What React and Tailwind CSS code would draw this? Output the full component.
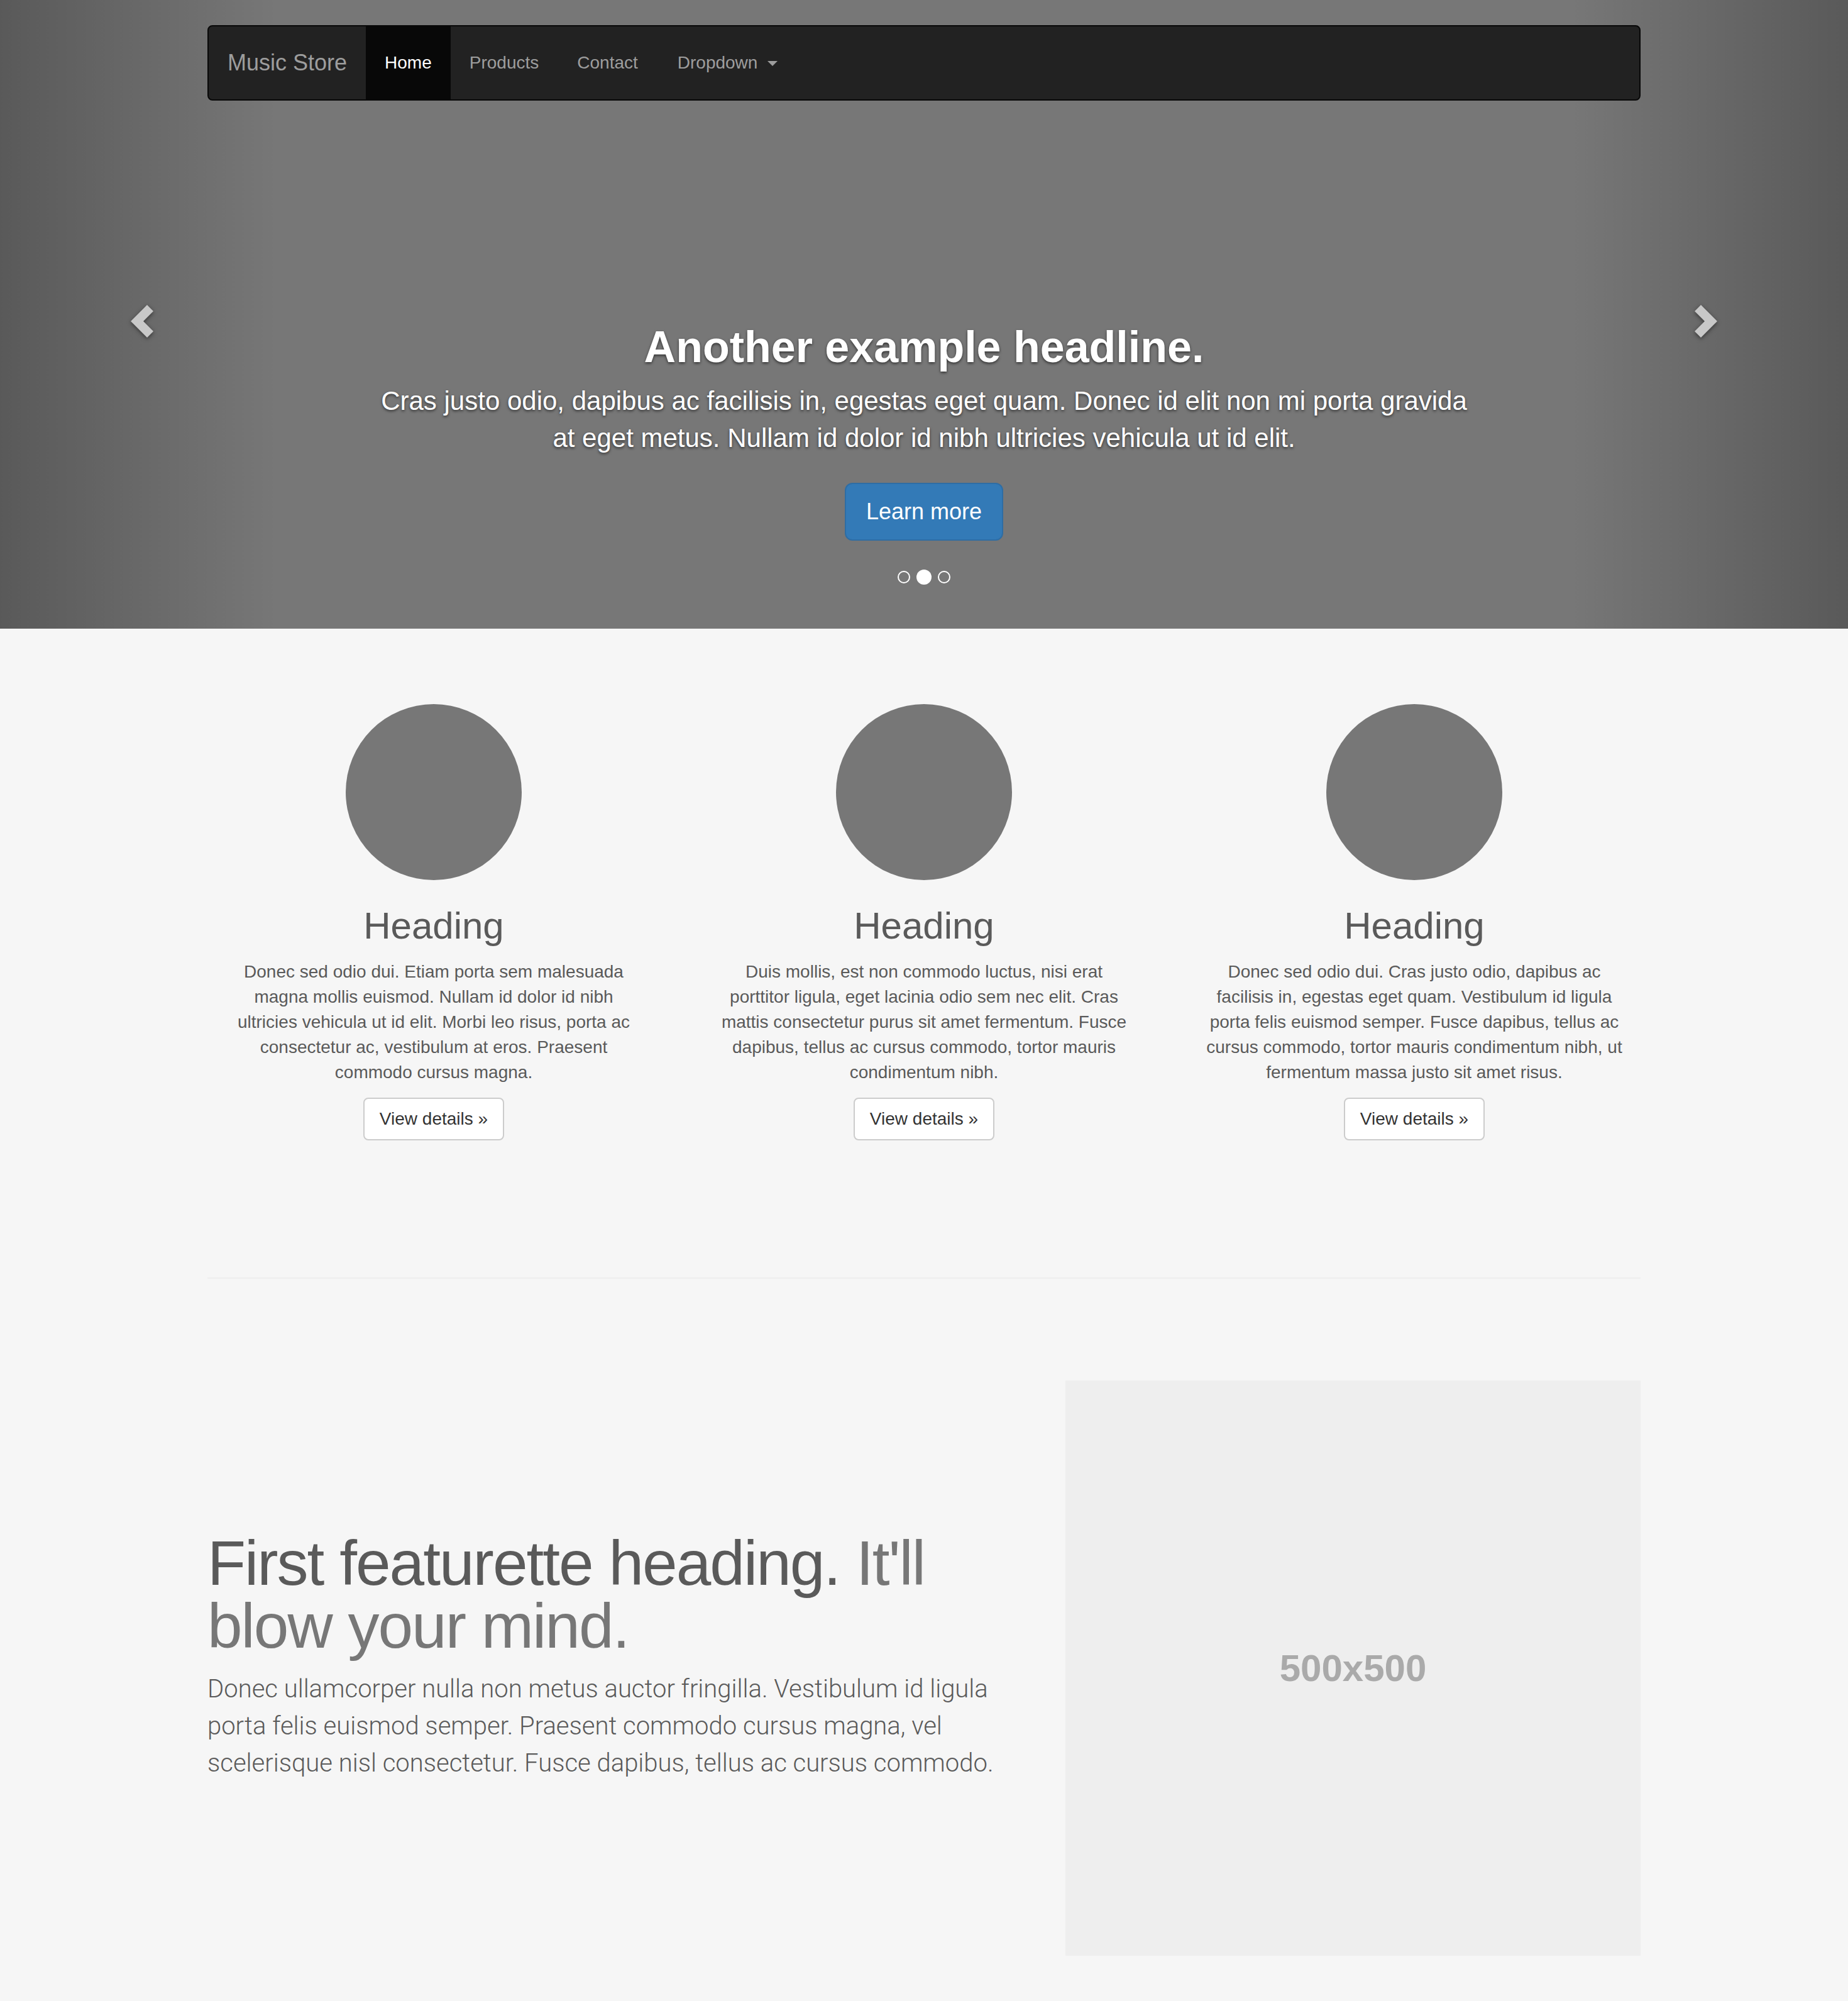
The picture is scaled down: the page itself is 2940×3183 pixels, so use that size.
export default function App() {
  const cols = [
    {
      text: "Donec sed odio dui. Etiam porta sem malesuada magna mollis euismod. Nullam id dolor id nibh ultricies vehicula ut id elit. Morbi leo risus, porta ac consectetur ac, vestibulum at eros. Praesent commodo cursus magna.",
    },
    {
      text: "Duis mollis, est non commodo luctus, nisi erat porttitor ligula, eget lacinia odio sem nec elit. Cras mattis consectetur purus sit amet fermentum. Fusce dapibus, tellus ac cursus commodo, tortor mauris condimentum nibh.",
    },
    {
      text: "Donec sed odio dui. Cras justo odio, dapibus ac facilisis in, egestas eget quam. Vestibulum id ligula porta felis euismod semper. Fusce dapibus, tellus ac cursus commodo, tortor mauris condimentum nibh, ut fermentum massa justo sit amet risus.",
    },
  ];

  return (
    <div className="min-h-[3183px] bg-[#f6f6f6] font-['Liberation_Sans',Arial,sans-serif] text-[#5a5a5a]">
      {/* Carousel */}
      <div className="relative h-[1000px] bg-[#777] flex flex-col items-center overflow-hidden">
        <div className="absolute inset-y-0 left-0 w-[441px] bg-linear-to-r from-black/25 to-black/0 flex items-center justify-center">
          <svg
            width="36"
            height="54"
            viewBox="0 0 36 54"
            className="ml-[11px] mt-[22px] drop-shadow-[0_2px_3px_rgba(0,0,0,0.5)]"
          >
            <polygon points="0,27 26,1 36,11 20,27 36,43 26,53" fill="#c8c8c8" />
          </svg>
        </div>
        <div className="absolute inset-y-0 right-0 w-[441px] bg-linear-to-l from-black/25 to-black/0 flex items-center justify-center">
          <svg
            width="36"
            height="54"
            viewBox="0 0 36 54"
            className="mr-[11px] mt-[22px] drop-shadow-[0_2px_3px_rgba(0,0,0,0.5)]"
          >
            <polygon points="36,27 10,1 0,11 16,27 0,43 10,53" fill="#c8c8c8" />
          </svg>
        </div>

        {/* Navbar */}
        <nav className="relative z-10 mt-[40px] w-[2280px] h-[120px] bg-[#222] border-2 border-[#080808] rounded-[8px] flex items-stretch overflow-hidden">
          <a className="px-[30px] flex items-center text-[36px] text-[#9d9d9d]">Music Store</a>
          <a className="px-[30px] flex items-center text-[28px] text-white bg-[#080808]">Home</a>
          <a className="px-[30px] flex items-center text-[28px] text-[#9d9d9d]">Products</a>
          <a className="pl-[31px] pr-[30px] flex items-center text-[28px] text-[#9d9d9d]">Contact</a>
          <a className="pl-[33px] pr-[30px] flex items-center text-[28px] text-[#9d9d9d]">
            Dropdown
            <span className="ml-[16px] mt-[2px] w-0 h-0 border-x-[8px] border-x-transparent border-t-[8px] border-t-[#9d9d9d]"></span>
          </a>
        </nav>

        {/* Caption */}
        <div className="relative z-10 mt-auto mb-[140px] w-[1764px] flex flex-col items-center text-center text-white [text-shadow:0_2px_4px_rgba(0,0,0,0.6)]">
          <h1 className="text-[70px] font-bold leading-[77px]">Another example headline.</h1>
          <p className="mt-[18px] text-[42px] leading-[58.8px]">
            Cras justo odio, dapibus ac facilisis in, egestas eget quam. Donec id elit non mi porta gravida at eget metus. Nullam id dolor id nibh ultricies vehicula ut id elit.
          </p>
          <a className="mt-[41px] h-[92px] px-[32px] flex items-center bg-[#337ab7] border-2 border-[#2e6da4] rounded-[12px] text-[36px] text-white [text-shadow:none]">
            Learn more
          </a>
        </div>

        {/* Indicators */}
        <div className="absolute bottom-[70px] inset-x-0 flex justify-center items-center gap-[10px]">
          <span className="w-[20px] h-[20px] rounded-full border-2 border-white"></span>
          <span className="w-[24px] h-[24px] rounded-full bg-white"></span>
          <span className="w-[20px] h-[20px] rounded-full border-2 border-white"></span>
        </div>
      </div>

      {/* Marketing */}
      <div className="mx-auto w-[2280px] mt-[120px] grid grid-cols-3 gap-x-[60px]">
        {cols.map((c, i) => (
          <div key={i} className="flex flex-col items-center text-center">
            <div className="w-[280px] h-[280px] rounded-full bg-[#777]"></div>
            <h2 className="mt-[40px] text-[60px] leading-[66px]">Heading</h2>
            <p className="mt-[20px] w-[665px] text-[28px] leading-[40px]">{c.text}</p>
            <a className="mt-[20px] h-[68px] px-[24px] flex items-center bg-white border-2 border-[#ccc] rounded-[8px] text-[28px] text-[#333]">
              View details »
            </a>
          </div>
        ))}
      </div>

      <hr className="mx-auto w-[2280px] mt-[218px] border-t-2 border-[#eee]" />

      {/* Featurette */}
      <div className="mx-auto w-[2280px] mt-[162px] flex gap-[60px]">
        <div className="w-[1305px]">
          <h2 className="mt-[240px] text-[100px] leading-[100px] tracking-[-2px]">
            First featurette heading. <span className="text-[#777]">It'll blow your mind.</span>
          </h2>
          <p className="mt-[22px] font-['Roboto',sans-serif] font-light text-[40px] leading-[58.8px]">
            Donec ullamcorper nulla non metus auctor fringilla. Vestibulum id ligula porta felis euismod semper. Praesent commodo cursus magna, vel scelerisque nisl consectetur. Fusce dapibus, tellus ac cursus commodo.
          </p>
        </div>
        <div className="w-[915px] h-[915px] bg-[#eee] flex items-center justify-center">
          <span className="text-[60px] font-bold text-[#aaa]">500x500</span>
        </div>
      </div>
    </div>
  );
}
